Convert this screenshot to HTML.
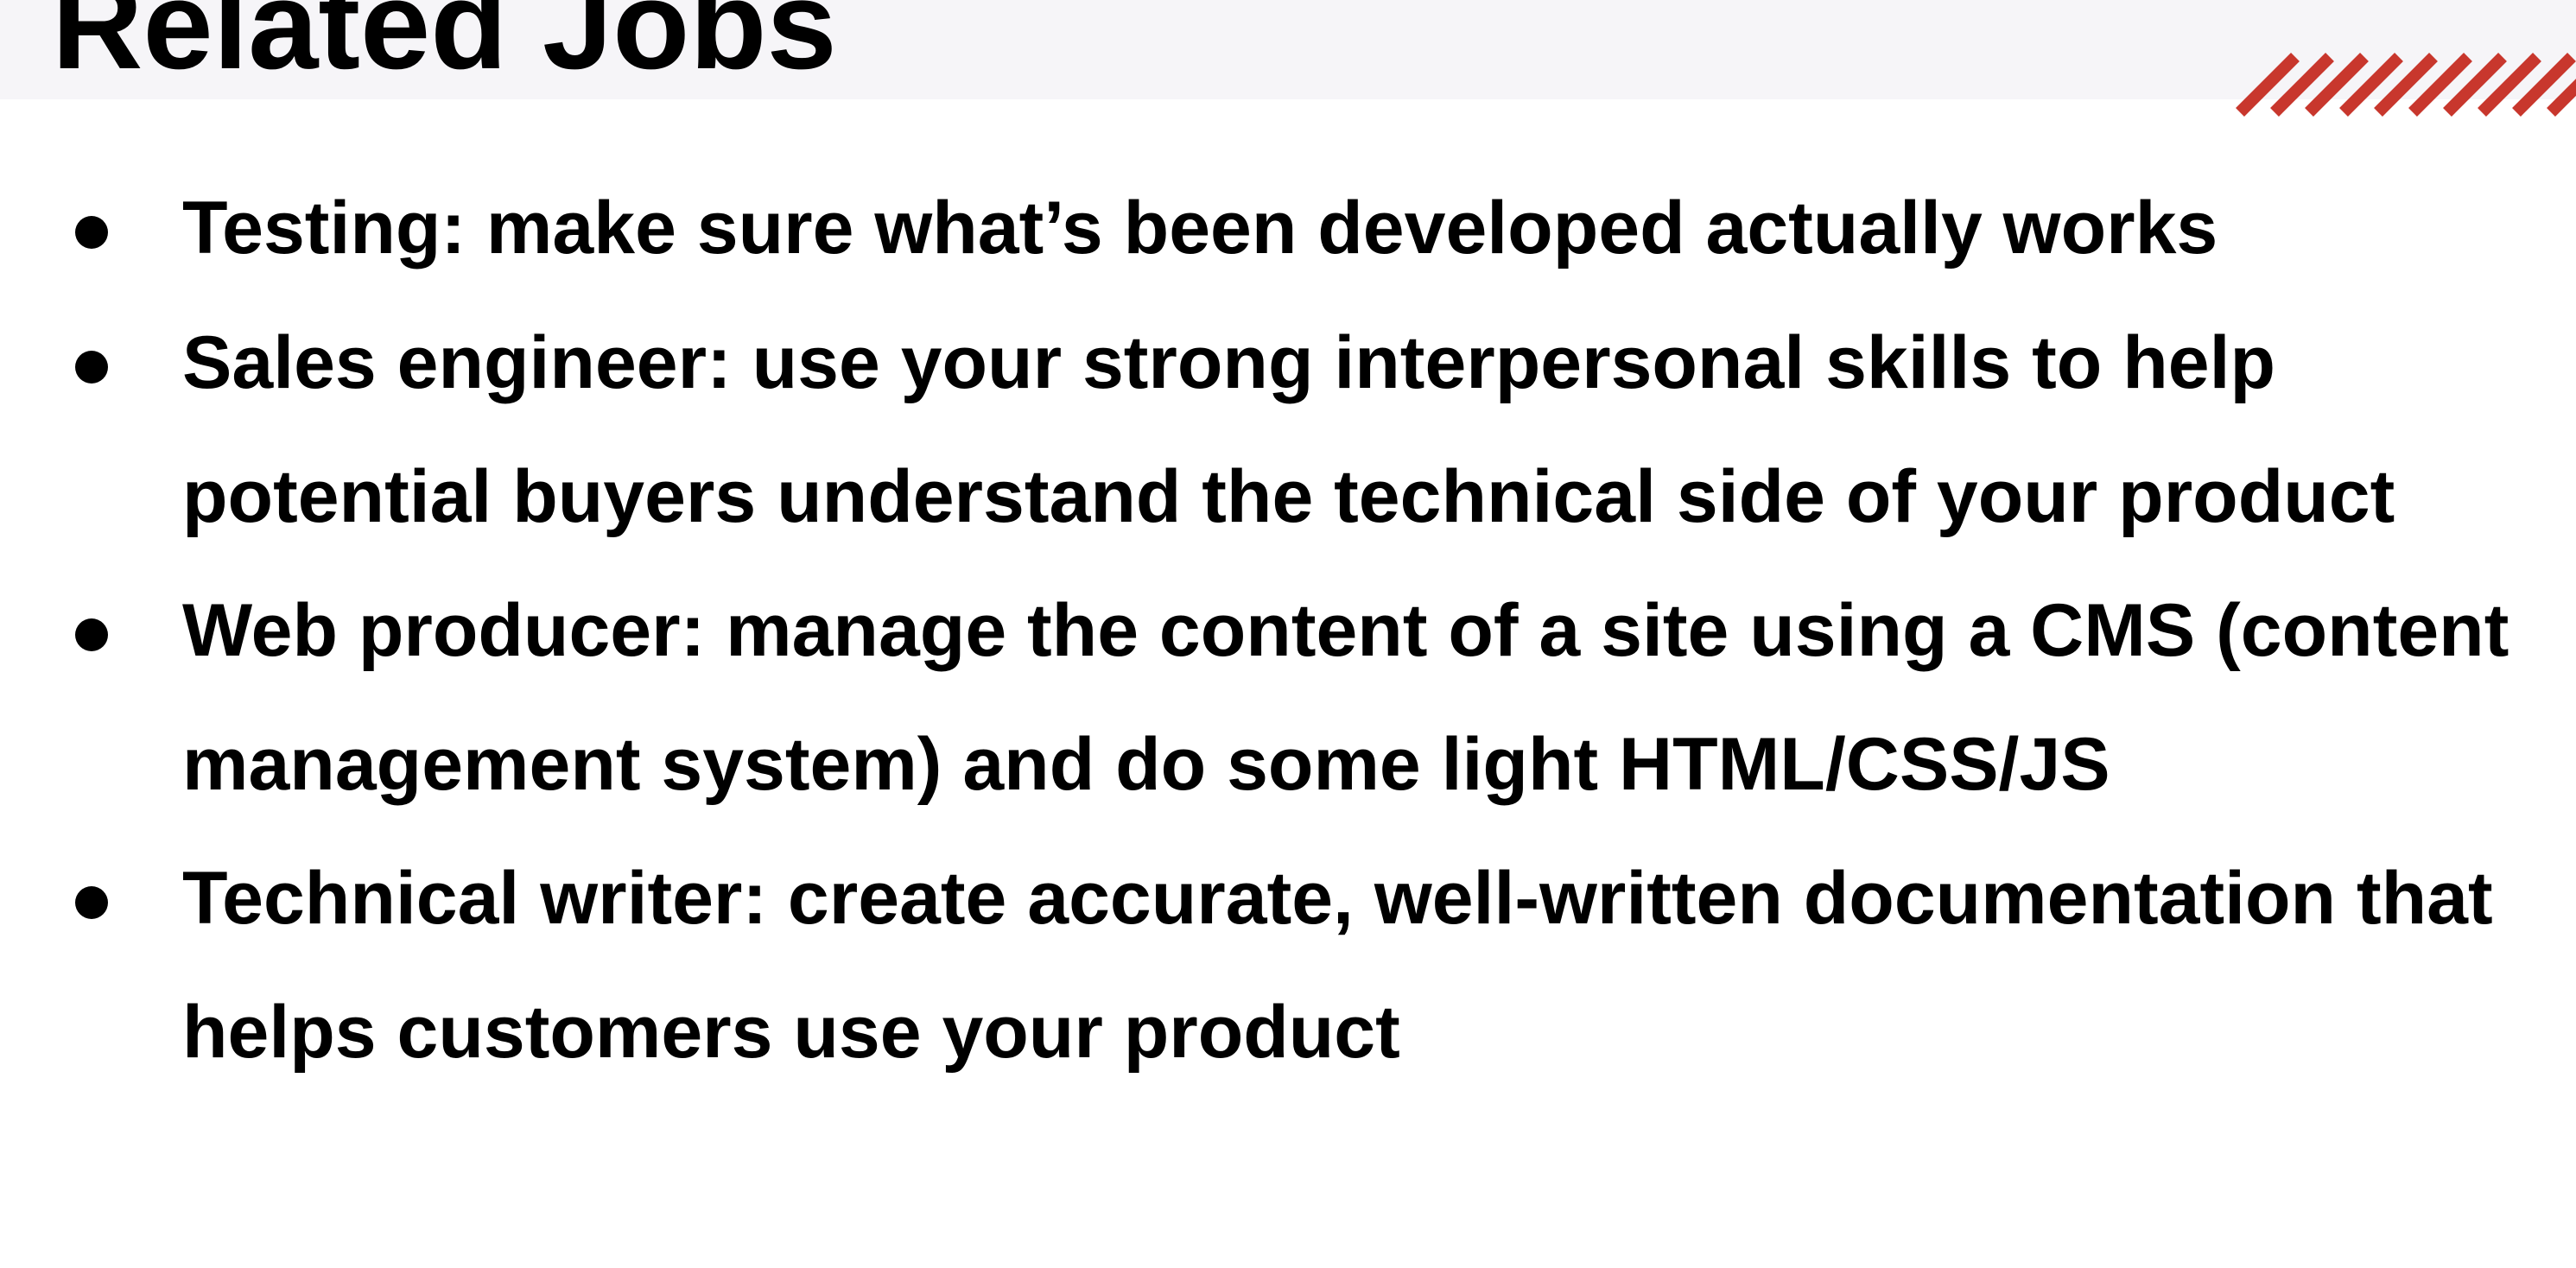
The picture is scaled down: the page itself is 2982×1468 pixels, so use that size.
<!DOCTYPE html>
<html><head><meta charset="utf-8"><style>
html,body{margin:0;padding:0;}
body{width:2982px;height:1468px;position:relative;overflow:hidden;background:#fff;font-family:"Liberation Sans",Arial,sans-serif;font-weight:bold;color:#000;}
.hdr{position:absolute;left:0;top:0;width:2982px;height:115px;background:#f6f5f8;}
.title{position:absolute;left:60px;top:-44px;font-size:146px;line-height:146px;white-space:nowrap;}
.line{position:absolute;left:211px;font-size:86px;line-height:155px;height:155px;white-space:nowrap;}
.dot{position:absolute;left:87px;width:38px;height:38px;border-radius:50%;background:#000;}
</style></head><body>
<div class="hdr"></div>
<div class="title">Related Jobs</div>
<svg style="position:absolute;left:2560px;top:50px" width="422" height="100">
<g stroke="#c8372d" stroke-width="14" stroke-linecap="butt">
<line x1="33" y1="80" x2="97" y2="16"/>
<line x1="73" y1="80" x2="137" y2="16"/>
<line x1="113" y1="80" x2="177" y2="16"/>
<line x1="153" y1="80" x2="217" y2="16"/>
<line x1="193" y1="80" x2="257" y2="16"/>
<line x1="233" y1="80" x2="297" y2="16"/>
<line x1="273" y1="80" x2="337" y2="16"/>
<line x1="313" y1="80" x2="377" y2="16"/>
<line x1="353" y1="80" x2="417" y2="16"/>
<line x1="393" y1="80" x2="457" y2="16"/>
</g></svg>
<div class="dot" style="top:250px"></div>
<div class="dot" style="top:406px"></div>
<div class="dot" style="top:716px"></div>
<div class="dot" style="top:1026px"></div>
<div class="line" style="top:187px">Testing: make sure what’s been developed actually works</div>
<div class="line" style="top:343px">Sales engineer: use your strong interpersonal skills to help</div>
<div class="line" style="top:498px">potential buyers understand the technical side of your product</div>
<div class="line" style="top:653px">Web producer: manage the content of a site using a CMS (content</div>
<div class="line" style="top:808px">management system) and do some light HTML/CSS/JS</div>
<div class="line" style="top:963px">Technical writer: create accurate, well-written documentation that</div>
<div class="line" style="top:1118px">helps customers use your product</div>
</body></html>
